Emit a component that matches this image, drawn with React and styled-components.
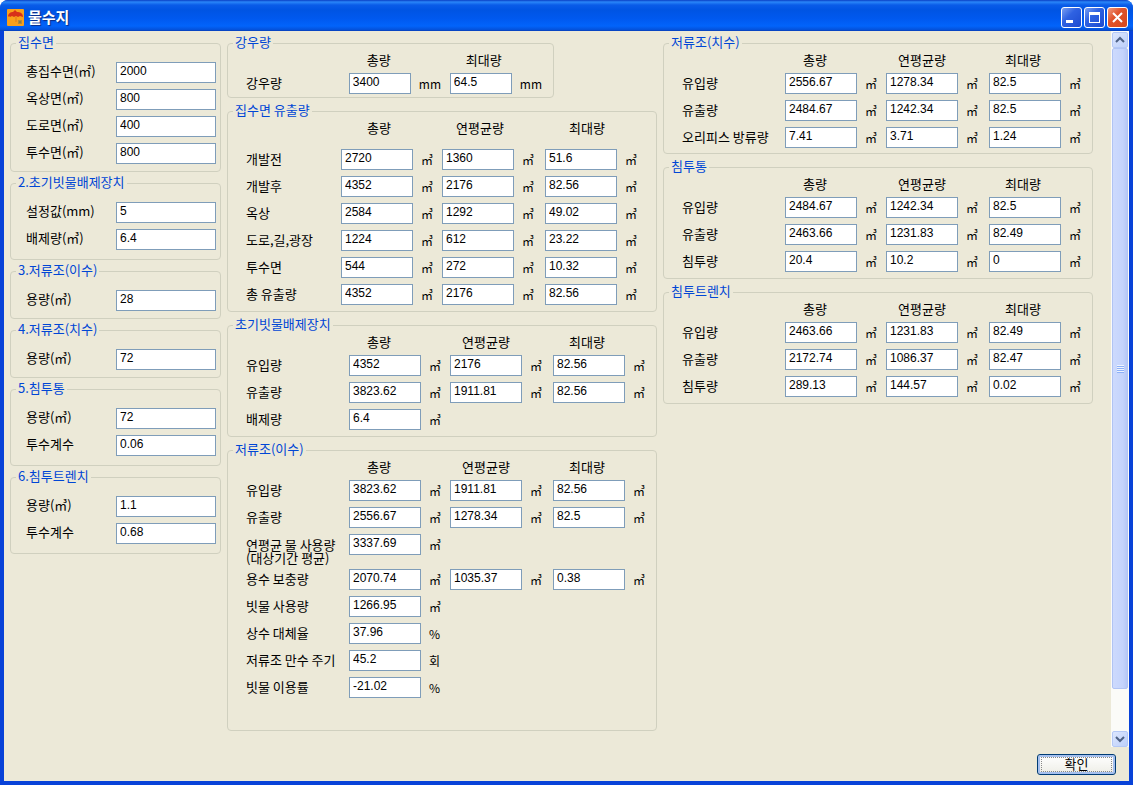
import styled, { createGlobalStyle, css } from 'styled-components';

const CUBIC = '㎥';

const sideGroups = [
  {
    title: '집수면',
    bottom: 7,
    fields: [
      ['총집수면(㎡)', '2000'],
      ['옥상면(㎡)', '800'],
      ['도로면(㎡)', '400'],
      ['투수면(㎡)', '800'],
    ],
  },
  {
    title: '2.초기빗물배제장치',
    bottom: 9,
    fields: [
      ['설정값(mm)', '5'],
      ['배제량(㎥)', '6.4'],
    ],
  },
  { title: '3.저류조(이수)', bottom: 7, fields: [['용량(㎥)', '28']] },
  { title: '4.저류조(치수)', bottom: 7, fields: [['용량(㎥)', '72']] },
  {
    title: '5.침투통',
    bottom: 9,
    fields: [
      ['용량(㎥)', '72'],
      ['투수계수', '0.06'],
    ],
  },
  {
    title: '6.침투트렌치',
    bottom: 9,
    fields: [
      ['용량(㎥)', '1.1'],
      ['투수계수', '0.68'],
    ],
  },
];

// width is the whole column, head is the box the title is centred in
const defaultColumns = [
  { title: '총량', width: 101, head: 60 },
  { title: '연평균량', width: 103, head: 72 },
  { title: '최대량', width: 103, head: 68 },
];

const rainColumns = [
  { title: '총량', width: 101, head: 60 },
  { title: '최대량', width: 103, head: 68 },
];

const runoffColumns = [
  { title: '총량', width: 101, head: 76 },
  { title: '연평균량', width: 103, head: 76 },
  { title: '최대량', width: 111, head: 84 },
];

const middleGroups = [
  {
    title: '강우량',
    narrow: true,
    bottom: 3,
    columns: rainColumns,
    rows: [{ label: '강우량', unit: 'mm', values: ['3400', '64.5'] }],
  },
  {
    title: '집수면 유출량',
    bottom: 6,
    tallHead: true,
    columns: runoffColumns,
    rows: [
      { label: '개발전', values: ['2720', '1360', '51.6'] },
      { label: '개발후', values: ['4352', '2176', '82.56'] },
      { label: '옥상', values: ['2584', '1292', '49.02'] },
      { label: '도로,길,광장', values: ['1224', '612', '23.22'] },
      { label: '투수면', values: ['544', '272', '10.32'] },
      { label: '총 유출량', values: ['4352', '2176', '82.56'] },
    ],
  },
  {
    title: '초기빗물배제장치',
    bottom: 6,
    rows: [
      { label: '유입량', values: ['4352', '2176', '82.56'] },
      { label: '유출량', values: ['3823.62', '1911.81', '82.56'] },
      { label: '배제량', values: ['6.4'] },
    ],
  },
  {
    title: '저류조(이수)',
    bottom: 32,
    rows: [
      { label: '유입량', values: ['3823.62', '1911.81', '82.56'] },
      { label: '유출량', values: ['2556.67', '1278.34', '82.5'] },
      {
        label: '연평균 물 사용량',
        note: '(대상기간 평균)',
        values: ['3337.69'],
      },
      { label: '용수 보충량', values: ['2070.74', '1035.37', '0.38'] },
      { label: '빗물 사용량', values: ['1266.95'] },
      { label: '상수 대체율', unit: '%', values: ['37.96'] },
      { label: '저류조 만수 주기', unit: '회', values: ['45.2'] },
      { label: '빗물 이용률', unit: '%', values: ['-21.02'] },
    ],
  },
];

const rightGroups = [
  {
    title: '저류조(치수)',
    bottom: 5,
    rows: [
      { label: '유입량', values: ['2556.67', '1278.34', '82.5'] },
      { label: '유출량', values: ['2484.67', '1242.34', '82.5'] },
      { label: '오리피스 방류량', values: ['7.41', '3.71', '1.24'] },
    ],
  },
  {
    title: '침투통',
    bottom: 6,
    rows: [
      { label: '유입량', values: ['2484.67', '1242.34', '82.5'] },
      { label: '유출량', values: ['2463.66', '1231.83', '82.49'] },
      { label: '침투량', values: ['20.4', '10.2', '0'] },
    ],
  },
  {
    title: '침투트렌치',
    bottom: 6,
    rows: [
      { label: '유입량', values: ['2463.66', '1231.83', '82.49'] },
      { label: '유출량', values: ['2172.74', '1086.37', '82.47'] },
      { label: '침투량', values: ['289.13', '144.57', '0.02'] },
    ],
  },
];

const SideGroup = ({ group, index }) => (
  <Group $bottom={group.bottom}>
    <Legend>{group.title}</Legend>
    <SideFields>
      {group.fields.map(([label, value], i) => {
        const id = `side-${index}-${i}`;
        return (
          <SideRow key={id}>
            <SideLabel htmlFor={id}>{label}</SideLabel>
            <SideInput id={id} type="text" defaultValue={value} />
          </SideRow>
        );
      })}
    </SideFields>
  </Group>
);

const TableGroup = ({ group, id }) => {
  const columns = group.columns || defaultColumns;
  return (
    <Group $wide $narrow={group.narrow} $bottom={group.bottom}>
      <Legend>{group.title}</Legend>
      <Table>
        <colgroup>
          <col />
          {columns.map((c) => (
            <Col key={c.title} $width={c.width} />
          ))}
        </colgroup>
        <thead>
          <tr>
            <HeadCell $tall={group.tallHead} />
            {columns.map((c) => (
              <HeadCell key={c.title} scope="col" $tall={group.tallHead}>
                <HeadText $width={c.head}>{c.title}</HeadText>
              </HeadCell>
            ))}
          </tr>
        </thead>
        <tbody>
          {group.rows.map((row, r) => (
            <tr key={row.label}>
              <RowHead scope="row">
                <RowLabel htmlFor={`${id}-${r}-0`} $double={!!row.note}>
                  {row.label}
                  {row.note && <span>{row.note}</span>}
                </RowLabel>
              </RowHead>
              {columns.map((c, i) => (
                <Cell key={c.title}>
                  {row.values[i] !== undefined && (
                    <Value>
                      <ValueInput
                        id={`${id}-${r}-${i}`}
                        type="text"
                        aria-label={`${row.label} ${c.title}`}
                        defaultValue={row.values[i]}
                        $small={group.narrow}
                      />
                      <Unit>{row.unit || CUBIC}</Unit>
                    </Value>
                  )}
                </Cell>
              ))}
            </tr>
          ))}
        </tbody>
      </Table>
    </Group>
  );
};

const Umbrella = () => (
  <svg width="17" height="17" viewBox="0 0 17 17" aria-hidden="true">
    <rect width="17" height="17" rx="1" fill="#f9a01b" />
    <path
      d="M1 8C1 4 4 3 6 3l2-2 2 2c3 0 6 1 6 5l-3-1-2 1-2-1-2 1-2-1-2 1-1-1z"
      fill="#d8301a"
    />
    <path d="M9 8v5" stroke="#e0781a" />
    <path d="M11 11h4v4h-4z" fill="#b98a3a" />
    <path d="M12 12h2v2h-2z" fill="#8d7f42" />
  </svg>
);

const Chevron = ({ up }) => (
  <svg width="10" height="8" viewBox="0 0 10 8" aria-hidden="true">
    <path
      d={up ? 'M1 6l4-4 4 4' : 'M1 2l4 4 4-4'}
      fill="none"
      stroke="#4d6185"
      strokeWidth="2"
    />
  </svg>
);

const App = () => (
  <>
    <GlobalStyle />
    <Window>
      <TitleBar>
        <Umbrella />
        <Title>물수지</Title>
        <WindowButton type="button" aria-label="최소화">
          <svg width="19" height="19" viewBox="0 0 19 19">
            <path d="M4 12h7v3H4z" fill="#fff" />
          </svg>
        </WindowButton>
        <WindowButton type="button" aria-label="최대화">
          <svg width="19" height="19" viewBox="0 0 19 19">
            <path d="M4 4h11v11H4zM5 7v7h9V7z" fill="#fff" fillRule="evenodd" />
          </svg>
        </WindowButton>
        <WindowButton type="button" aria-label="닫기" $close>
          <svg width="19" height="19" viewBox="0 0 19 19">
            <path d="M5 5l9 9M14 5l-9 9" stroke="#fff" strokeWidth="2" />
          </svg>
        </WindowButton>
      </TitleBar>
      <Body>
        <Scroller>
          <Columns>
            <SideColumn>
              {sideGroups.map((g, i) => (
                <SideGroup key={g.title} group={g} index={i} />
              ))}
            </SideColumn>
            <Column>
              {middleGroups.map((g, i) => (
                <TableGroup key={g.title} group={g} id={`middle-${i}`} />
              ))}
            </Column>
            <Column>
              {rightGroups.map((g, i) => (
                <TableGroup key={g.title} group={g} id={`right-${i}`} />
              ))}
            </Column>
          </Columns>
          <ScrollBar>
            <ScrollButton type="button" aria-label="위로">
              <Chevron up />
            </ScrollButton>
            <Thumb>
              <Grip />
            </Thumb>
            <Track />
            <ScrollButton type="button" aria-label="아래로">
              <Chevron />
            </ScrollButton>
          </ScrollBar>
        </Scroller>
        <Footer>
          <OkButton type="button">
            <span>확인</span>
          </OkButton>
        </Footer>
      </Body>
    </Window>
  </>
);

export default App;

const GlobalStyle = createGlobalStyle`
  * {
    box-sizing: border-box;
  }

  body {
    margin: 0;
    background: #fff;
    color: #000;
    font-family: 'Noto Sans CJK KR', sans-serif;
    font-size: 13px;
  }

  #root {
    display: flex;
    min-height: 100vh;
    padding: 0 1px 1px 0;
  }
`;

const Window = styled.div`
  flex: 1;
  display: flex;
  flex-direction: column;
  border-radius: 8px 8px 0 0;
  background: #0842d8;
  overflow: hidden;
`;

const TitleBar = styled.header`
  display: flex;
  align-items: center;
  gap: 2px;
  height: 31px;
  padding: 4px 5px 0 7px;
  background: linear-gradient(
    #0a3fc4 0,
    #2a86f8 2px,
    #0a5ce8 5px,
    #0054e3 10px,
    #0058ee 18px,
    #0264fb 26px,
    #0450d8 30px,
    #0a3ab0 31px
  );
`;

const Title = styled.h1`
  flex: 1;
  margin: 0 0 2px 2px;
  color: #fff;
  font-size: 15px;
  font-weight: 700;
  line-height: 20px;
  text-shadow: 1px 1px 1px #0a2a80;
`;

const WindowButton = styled.button`
  width: 21px;
  height: 21px;
  padding: 0;
  border: 1px solid #fff;
  border-radius: 3px;
  background: ${({ $close }) =>
    $close
      ? 'linear-gradient(135deg, #f09a80, #e0532c 40%, #d8481c)'
      : 'linear-gradient(135deg, #7a9ff2, #2f62e2 40%, #1c4ad0)'};

  svg {
    display: block;
  }
`;

const Body = styled.main`
  flex: 1;
  display: flex;
  flex-direction: column;
  margin: 0 4px 4px;
  background: #ece9d8;
`;

const Scroller = styled.div`
  flex: 1;
  display: flex;
`;

const Columns = styled.div`
  flex: 1;
  display: grid;
  grid-template-columns: minmax(0, 211fr) minmax(0, 430fr) minmax(0, 430fr);
  gap: 6px;
  align-items: start;
  padding: 5px 18px 5px 6px;
`;

const Column = styled.div`
  display: flex;
  flex-direction: column;
  gap: 6px;
`;

const SideColumn = styled(Column)`
  gap: 4px;
`;

const Group = styled.fieldset`
  width: ${({ $narrow }) => ($narrow ? '76%' : '100%')};
  min-width: 0;
  margin: 0;
  padding: 0 ${({ $wide }) => ($wide ? 0 : 4)}px ${({ $bottom }) => $bottom}px
    ${({ $wide }) => ($wide ? 18 : 15)}px;
  border: 1px solid #d0d0bf;
  border-radius: 4px;
`;

const Legend = styled.legend`
  height: 14px;
  margin-left: -13px;
  padding: 0 2px;
  color: #0046d5;
  line-height: 12px;

  ${SideColumn} & {
    margin-left: -10px;
  }
`;

const SideFields = styled.div`
  display: flex;
  flex-direction: column;
  gap: 6px;
  padding-top: 12px;
`;

const SideRow = styled.div`
  display: flex;
`;

const SideLabel = styled.label`
  width: 90px;
  line-height: 18px;
  white-space: nowrap;
`;

const inputStyle = css`
  height: 21px;
  padding: 0 2px 4px 3px;
  border: 1px solid #7f9db9;
  border-radius: 0;
  background: #fff;
  color: #000;
  font-family: 'Liberation Sans', sans-serif;
  font-size: 12px;
  outline: none;
`;

const SideInput = styled.input`
  ${inputStyle}
  flex: 1;
  min-width: 0;
`;

const Table = styled.table`
  width: 100%;
  table-layout: fixed;
  border-collapse: collapse;
`;

const Col = styled.col`
  width: ${({ $width }) => $width}px;
`;

const HeadCell = styled.th`
  height: ${({ $tall }) => ($tall ? 31 : 23)}px;
  padding: 0;
  font-weight: 400;
  line-height: 19px;
  text-align: left;
  vertical-align: top;
`;

const HeadText = styled.span`
  display: block;
  width: ${({ $width }) => $width}px;
  text-align: center;
`;

const Cell = styled.td`
  padding: 0 0 6px;
  vertical-align: top;

  tr:last-child > & {
    padding-bottom: 0;
  }
`;

const RowHead = styled.th`
  padding: 0;
  font-weight: 400;
  text-align: left;
  vertical-align: top;
`;

const RowLabel = styled.label`
  display: block;
  line-height: 20px;
  white-space: nowrap;

  ${({ $double }) =>
    $double &&
    css`
      padding: 4px 0 5px;
      line-height: 13px;
    `}

  span {
    display: block;
  }
`;

const Value = styled.div`
  display: flex;
  gap: 8px;
`;

const ValueInput = styled.input`
  ${inputStyle}
  width: ${({ $small }) => ($small ? 62 : 72)}px;
`;

const Unit = styled.span`
  height: 21px;
  font-size: 12px;
  line-height: 22px;
`;

const ScrollBar = styled.div`
  display: flex;
  flex-direction: column;
  width: 18px;
  padding: 1px 1px 0;
  background: #fbfbf8;
`;

const ScrollButton = styled.button`
  display: flex;
  align-items: center;
  justify-content: center;
  height: 16px;
  padding: 0;
  border: 1px solid #b4c8f6;
  border-radius: 2px;
  background: linear-gradient(135deg, #dce6fe, #bccffa);
`;

const Thumb = styled.div`
  flex: 641;
  display: flex;
  align-items: center;
  justify-content: center;
  border: 1px solid #b0c4f4;
  border-radius: 2px;
  background: linear-gradient(90deg, #cddafd, #c4d4fc 70%, #b6c8f6);
`;

const Grip = styled.span`
  width: 7px;
  height: 8px;
  background: repeating-linear-gradient(#eef4fe 0 1px, #8cb0f8 1px 2px);
`;

const Track = styled.div`
  flex: 42;
`;

const Footer = styled.footer`
  display: flex;
  justify-content: flex-end;
  padding: 7px 13px 6px;
`;

const OkButton = styled.button`
  width: 79px;
  height: 21px;
  padding: 1px;
  border: 1px solid #003c74;
  border-radius: 3px;
  background: linear-gradient(#fff, #f0f0ea 85%, #e2dfd4);
  box-shadow: inset 0 0 0 2px #a6c0ee;
  color: #000;
  font-family: inherit;
  font-size: 13px;

  span {
    display: block;
    height: 15px;
    margin: 0 2px;
    border: 1px dotted #888;
    line-height: 12px;
  }
`;
